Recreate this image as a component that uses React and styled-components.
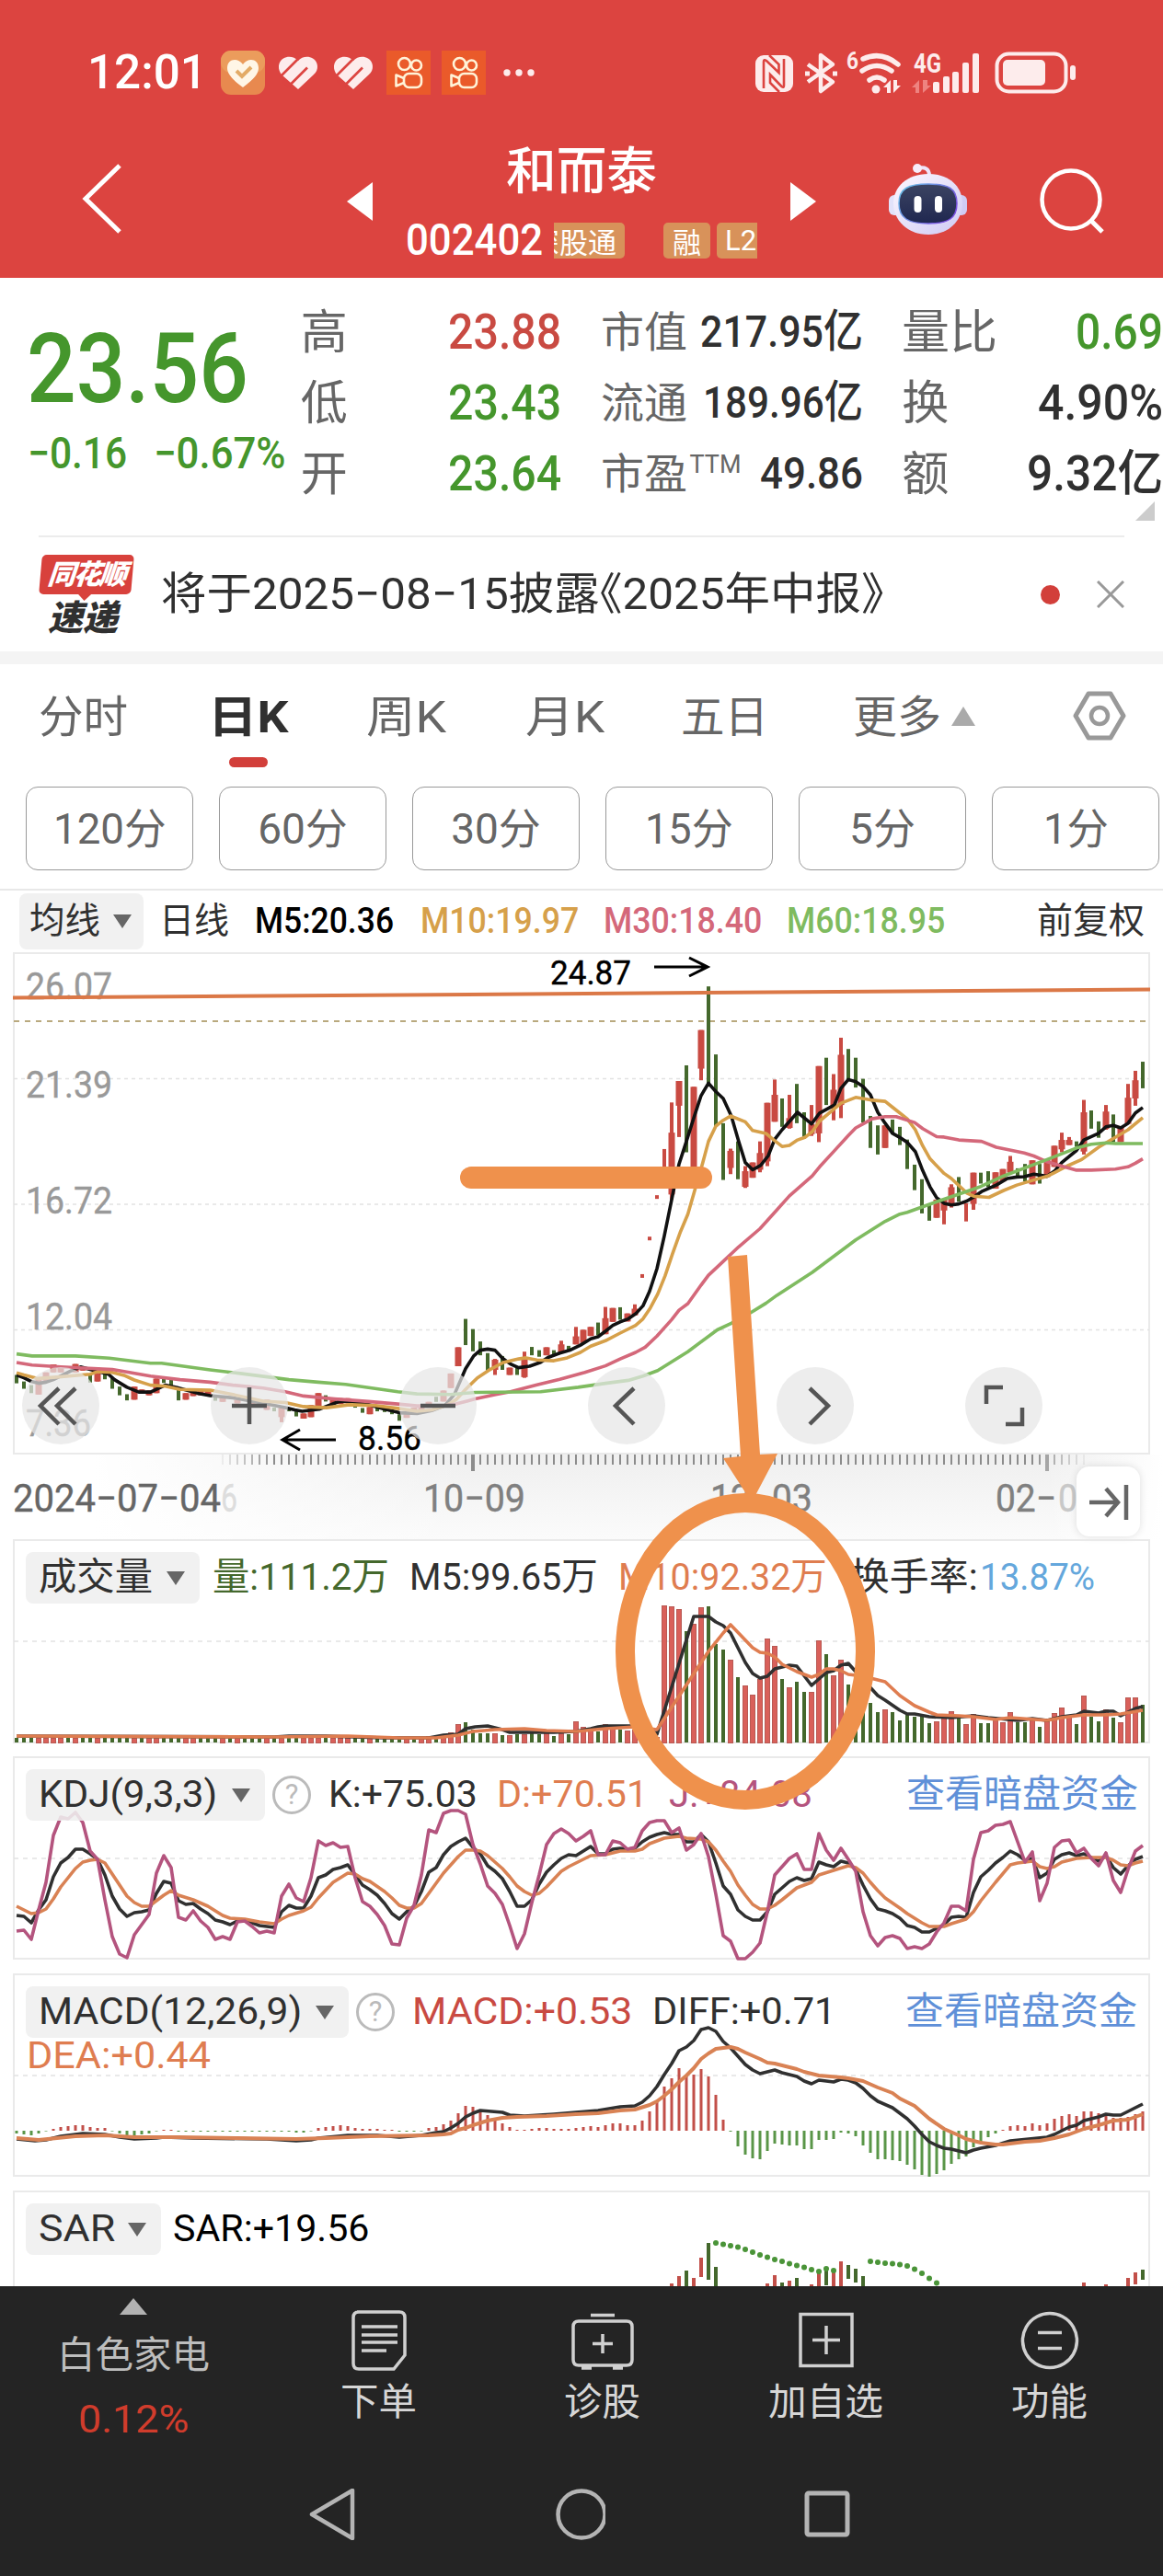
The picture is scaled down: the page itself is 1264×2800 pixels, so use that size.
import { useLayoutEffect, useRef, useState } from "react";
import styled, { createGlobalStyle } from "styled-components";

const COLORS = {
  red: "#dc4440",
  up: "#c94a42",
  down: "#45962c",
  darkGreen: "#44682c",
  ink: "#303030",
  grey: "#666",
  orange: "#df7d50",
  gold: "#d6a04a",
  pink: "#d4687a",
  green: "#7fbb60",
  purple: "#b4547e",
  blue: "#5f90d8",
  mark: "#ef914c",
};

const FONT = '"Roboto", "Noto Sans CJK SC", sans-serif';

/* ---------- chart data: x is the bar index, y is px inside the panel ---------- */

const STEP = 8;
const barX = (i) => 3 + i * STEP;
const priceY = (v) => (v - 15) / 2.529;

const MA5 =
  "0,1172 1,1180 2,1190 3,1195 4,1192 5,1185 7.5,1160 8.7,1150 10,1157 12.5,1170 13.3,1185 15,1206 16.6,1219 18.2,1219 20.2,1200 21.7,1206 24.8,1223 26.3,1229 29.4,1235 33.5,1250 36.5,1262 37.8,1268 38.8,1272 41.1,1266 43.7,1246 45.2,1244 47.2,1250 49.8,1265 52,1276 54.4,1278 56.4,1270 58.2,1256 59.5,1225 61,1155 62.1,1120 63,1104 64,1101 65,1104 66,1126 67.1,1142 68.2,1152 69.7,1148 71.2,1137 72.2,1124 73.8,1112 75.3,1103 76.6,1090 78,1073 79,1067 80,1052 81,1036 82,1026 83.1,1018 84.1,1004 85.1,982 86,942 87,880 88,790 89,690 90,592 91,530 92,466 93,404 94,370 95,393 96,412 97.1,460 98.1,530 99,588 100,608 101.1,596 102.1,570 103,524 104,498 106.1,450 108,482 109.1,452 111.1,430 112,384 113,360 114,366 115,379 116,402 117,450 118,480 119,508 120,519 121,533 122.1,558 123.1,610 124.1,655 125,685 126,700 127,705 128,702 129.1,694 130.1,682 131.1,668 133.1,650 134.6,632 135.9,628 136.9,627 138.2,620 140,626 141,612 142,588 144,555 145,526 147,508 148,490 149,486 150,493 151,480 152,452 153,437";
const MA10 =
  "0,1166 1,1172 2.9,1182 5.4,1178 10,1170 11,1163 13,1165 14.6,1173 16,1186 18.2,1200 20.2,1203 22.2,1212 26.3,1214 29.4,1226 33.5,1244 36.5,1248 39,1259 42.1,1262 45.2,1254 48.8,1256 51.8,1264 54.4,1272 56.4,1268 58.5,1255 59.7,1240 61,1212 62.6,1180 64.1,1160 66.1,1138 68.2,1128 69.2,1125 70.7,1131 73,1133 74.8,1125 76.6,1110 78,1093 80,1078 82,1057 84.1,1036 85.1,1018 86.1,988 87.1,950 88.1,900 89.1,840 90.2,778 91.2,730 92.2,660 93.2,590 94,530 95,488 96,472 97,460 99,476 100,500 101.8,508 102.8,525 104,544 105,541 106.1,526 107.1,519 108.1,503 109.1,474 111.1,440 112,425 114,409 116,416 118,420 119,436 121,468 122.1,498 123.1,542 124.1,578 126,618 127,632 129.1,672 130.1,681 132.1,684 134.1,665 135.9,650 138.2,636 140,626 141,616 142.7,598 144.7,580 147,546 149,522 151,498 153,465";
const MA30 =
  "0,1138 2.1,1145 6,1150 13,1157 18.2,1175 22.2,1185 26.3,1192 29.4,1200 33.5,1208 36.5,1218 39,1230 43.2,1238 47.8,1245 51.8,1252 54.4,1257 58,1257 59.7,1252 62.3,1238 65.1,1226 67.1,1218 70.7,1199 73.8,1184 77.2,1165 80,1147 82,1128 84.1,1110 85.4,1096 87,1065 89,1020 90,994 91.2,976 93,925 94,898 96,860 98.1,820 101,770 103,725 105,680 108.1,625 109.1,600 111.1,556 113,514 114,493 115,482 116.2,468 118,462 119.5,462 122,478 123.1,495 125,517 126,518 128,526 131.1,530 133.1,546 136.9,562 138.2,570 140,586 142,598 144,609 146,609 149.3,606 151,600 152,590 153,578";
const MA60 =
  "0,1114 2.1,1120 8,1120 12.6,1126 18.2,1140 19.7,1140 26.3,1158 30.4,1168 37,1185 41,1192 44.7,1198 51.8,1218 54.4,1224 59,1226 62.3,1220 71.2,1218 76.3,1206 80,1195 83.1,1187 85.1,1175 87.1,1160 91.2,1108 95.2,1048 97.1,1030 99.8,1000 101.8,975 103.3,953 108.1,890 114,801 118,750 120,730 121,725 125,696 131,654 134.1,625 140,580 144,548 146,538 148,534 149.3,536 153,536";

// [index, high, low]
const DOWN_CANDLES = [
  [0, 1172, 1195], [1, 1190, 1210], [2, 1200, 1222], [10, 1170, 1193], [12, 1165, 1184], [13, 1180, 1210],
  [14, 1204, 1228], [15, 1225, 1242], [20, 1183, 1194], [21, 1185, 1204], [22, 1210, 1242], [27, 1232, 1243],
  [35, 1262, 1272], [37, 1266, 1272], [38, 1272, 1286], [42, 1228, 1245], [46, 1250, 1262], [47, 1263, 1276],
  [49, 1262, 1272], [50, 1265, 1274], [51, 1268, 1280], [52, 1280, 1298], [57, 1232, 1246], [61, 1018, 1090],
  [62, 1046, 1107], [63, 1080, 1118], [64, 1112, 1160], [66, 1120, 1158], [68, 1150, 1172], [70, 1095, 1118],
  [71, 1104, 1122], [73, 1104, 1116], [75, 1092, 1104], [79, 1028, 1063], [82, 986, 1020], [91, 321, 560],
  [94, 104, 370], [95, 291, 490], [96, 480, 636], [98, 530, 634], [104, 412, 490], [106, 372, 480],
  [107, 450, 522], [110, 300, 430], [113, 276, 365], [114, 300, 382], [115, 358, 478], [116, 460, 548],
  [117, 486, 566], [119, 470, 510], [120, 490, 540], [121, 525, 606], [122, 594, 664], [123, 634, 728],
  [124, 705, 748], [128, 628, 696], [131, 616, 646], [132, 612, 656], [136, 604, 632], [137, 592, 640],
  [139, 592, 646], [144, 530, 545], [146, 445, 495], [147, 475, 520], [149, 456, 532], [153, 311, 384],
];

// [index, high, low, open, close], the body fills the whole range when left out
const UP_CANDLES = [
  [3, 1182, 1226], [4, 1165, 1188], [5, 1143, 1165], [6, 1152, 1165], [8, 1142, 1165], [9, 1150, 1160],
  [11, 1162, 1190], [16, 1204, 1240], [17, 1212, 1220], [18, 1215, 1228], [19, 1182, 1222], [23, 1222, 1240],
  [24, 1213, 1230], [25, 1216, 1228], [26, 1216, 1228], [28, 1235, 1246], [30, 1240, 1250], [32, 1243, 1252],
  [34, 1240, 1268], [36, 1262, 1302, 1262, 1288], [39, 1278, 1292], [40, 1255, 1288], [41, 1222, 1262],
  [43, 1236, 1252], [44, 1236, 1252], [45, 1236, 1250], [48, 1260, 1280], [53, 1275, 1290], [54, 1262, 1280],
  [55, 1255, 1272], [56, 1246, 1262], [58, 1215, 1245], [59, 1168, 1208], [60, 1096, 1148],
  [65, 1128, 1172, 1130, 1158], [67, 1152, 1172], [69, 1108, 1180, 1130, 1178], [72, 1096, 1118],
  [74, 1078, 1110, 1088, 1110], [76, 1040, 1088, 1066, 1088], [77, 1048, 1084], [78, 1040, 1065],
  [80, 985, 1060, 1016, 1060], [81, 988, 1026], [83, 1003, 1025], [84, 978, 1008, 990, 1008],
  [88, 551, 640, 600, 601], [89, 423, 690, 506, 676], [90, 364, 518, 364, 432], [92, 380, 600],
  [93, 224, 362, 224, 330], [97, 550, 620, 556, 603], [99, 598, 658, 612, 655], [100, 588, 630],
  [101, 530, 615, 562, 608], [102, 424, 598, 424, 585], [103, 360, 476, 402, 476], [105, 402, 495, 466, 493],
  [108, 430, 515, 482, 510], [109, 323, 532, 323, 508], [111, 345, 472, 388, 440], [112, 245, 466, 292, 430],
  [118, 486, 548], [125, 690, 740], [126, 690, 758, 690, 720], [127, 648, 712, 656, 706],
  [129, 700, 750, 701, 702], [130, 616, 718, 616, 702], [133, 615, 660], [134, 606, 640],
  [135, 570, 618, 586, 616], [138, 582, 648], [140, 580, 628], [141, 542, 600], [142, 506, 560, 526, 552],
  [143, 518, 540, 526, 540], [145, 416, 566, 450, 558], [148, 430, 498, 448, 496], [150, 490, 532],
  [151, 372, 482, 410, 482], [152, 336, 432, 362, 412],
];
const LIMIT_UPS = [[85, 900], [86, 797], [87, 683]];

const DOWN_DAYS = new Set([
  0, 1, 2, 7, 9, 10, 12, 13, 14, 15, 17, 20, 21, 22, 25, 26, 27, 29, 31, 32, 33, 35, 37, 38, 42, 46, 47, 49, 50,
  51, 52, 54, 57, 61, 62, 63, 64, 66, 68, 70, 71, 73, 75, 79, 82, 91, 94, 95, 96, 98, 104, 106, 107, 110, 113,
  114, 115, 116, 117, 119, 120, 121, 122, 123, 124, 128, 131, 132, 136, 137, 139, 144, 146, 147, 149, 153,
]);
const VOLUMES = [
  ...Array(56).fill(5), 7, 4, 7, 11, 20, 22, 14, 10, 10, 10, 8, 8, 9, 9, 10, 9, 11, 7, 10, 9, 23, 17, 14, 12, 20,
  15, 14, 13, 14, 8, 6, 6, 149, 148, 145, 121, 129, 147, 148, 107, 101, 90, 71, 62, 52, 69, 113, 105, 69, 60,
  66, 55, 55, 111, 96, 73, 90, 63, 50, 44, 43, 33, 36, 33, 24, 30, 28, 28, 21, 23, 28, 34, 28, 20, 31, 21, 21,
  24, 22, 33, 22, 22, 24, 17, 26, 32, 38, 28, 20, 51, 28, 23, 36, 27, 22, 49, 49, 41,
];
const VOL5 =
  "0,7 35,6 37,7 42,7 50,5 56,5 58,8 60,9 61,15 62.3,17 64,18 66,14 67,11 69,11 73,11 76,12 78,15 79,17 80,18 84,18 86,16 87,9 92,137 94,137 95,131 96,127 97,119 98,103 99,87 100,75 101,70 102,72 103,80 105,84 106,83 108,62 109,69 110,76 111,78 112,84 113,86 114,77 117,51 118,46 120,35 121,31 122,31 124,28 127,27 130,29 132,27 136,24 138,26 140,24 141,26 142,28 144,30 145,34 147,32 148,34 149,34 150,29 151,33 152,37 153,39";
const VOL10 =
  "0,7 35,6 45,7 52,5 57,5 60,8 62,12 65,14 69,15 72,13 76,12 80,15 84,17 87,14 94,99 96,119 97,128 100,103 101,98 102,97 103,93 104,85 106,77 108,71 109,74 110,80 111,80 112,78 113,74 114,73 116,70 118,66 120,51 122,40 124,33 125,30 128,29 130,28 133,25 135,27 140,24 142,27 145,30 148,30 150,31 153,35";

const KDJ_J = [
  189, 188, 198, 166, 136, 85, 65, 67, 60, 71, 102, 111, 155, 195, 214, 218, 193, 182, 171, 126, 107, 120, 174,
  177, 167, 178, 185, 198, 195, 198, 179, 178, 184, 191, 189, 191, 151, 138, 153, 157, 131, 91, 96, 93, 98, 97,
  131, 157, 162, 171, 183, 203, 204, 175, 161, 128, 79, 82, 61, 58, 58, 62, 95, 116, 140, 148, 160, 183, 208,
  192, 158, 128, 95, 83, 78, 83, 91, 86, 80, 106, 106, 91, 93, 100, 98, 80, 71, 69, 69, 82, 77, 101, 95, 83,
  108, 149, 194, 200, 219, 219, 212, 202, 168, 128, 119, 110, 105, 122, 122, 83, 101, 112, 99, 111, 124, 168,
  194, 205, 196, 194, 197, 208, 206, 208, 203, 190, 180, 162, 162, 167, 111, 82, 80, 74, 73, 70, 92, 114, 103,
  156, 137, 98, 91, 90, 104, 99, 110, 118, 104, 134, 147, 122, 102, 96,
];
const KDJ_K = [
  172, 173, 180, 166, 155, 130, 115, 109, 100, 100, 105, 111, 128, 151, 165, 173, 169, 168, 166, 148, 135, 137,
  156, 160, 159, 165, 170, 177, 179, 182, 178, 178, 180, 183, 184, 185, 168, 161, 164, 164, 151, 131, 128, 122,
  120, 117, 128, 139, 144, 150, 159, 170, 176, 168, 162, 146, 125, 120, 106, 97, 92, 88, 98, 105, 118, 124, 132,
  146, 162, 162, 155, 138, 125, 117, 110, 106, 107, 102, 97, 105, 105, 100, 99, 100, 99, 92, 87, 84, 82, 84, 84,
  92, 92, 84, 92, 115, 140, 149, 166, 173, 177, 177, 168, 149, 142, 135, 131, 134, 132, 114, 117, 119, 113, 115,
  122, 139, 154, 165, 167, 170, 175, 183, 185, 190, 190, 186, 182, 174, 173, 174, 147, 130, 123, 115, 109, 102,
  106, 112, 110, 131, 126, 111, 106, 104, 107, 105, 109, 113, 107, 120, 127, 118, 111, 108,
];
const KDJ_D =
  "0,162 1,166 2,170 3,169 4,165 5,154 6,141 7,131 8,121 9,114 10,112 11,111 12,115 13,127 14,139 15,151 16,158 17,162 18,162 19,156 20,150 21,145 22,150 24,155 26,162 28,172 29,175 31,176 33,179 35,181 36,176 37,172 39,167 40,163 41,153 43,136 45,126 46,127 47,132 48,135 50,146 51,153 52,161 53,164 54,164 55,159 56,148 58,126 60,108 61,101 62,101 63,102 64,107 66,121 67,130 68,140 69,146 70,150 71,148 72,141 74,124 75,119 77,111 78,107 80,106 82,102 84,102 85,100 86,94 87,91 88,88 90,86 91,88 93,89 94,92 95,101 96,113 97,124 98,139 99,150 100,160 101,165 102,165 103,161 104,155 106,142 108,136 109,128 111,123 113,118 114,120 115,126 116,136 117,145 118,153 120,164 121,170 123,180 124,184 126,184 127,181 129,176 130,168 131,156 133,136 135,117 136,115 138,113 139,119 140,121 141,119 142,114 144,110 146,109 148,109 149,112 150,117 151,118 152,115 153,113";

const DIFF =
  "0,179 2.5,181 4,180 6,176 9,173 12,174 14,177 16,179 19,178 20,177 24,178 34,179 38,181 40,180 41,178 45,175 49,175 52,177 55,175 57,172 58,171 59,167 60,162 61,155 62,151 63,148 66,150 67,153 69,154 73,152 76,150 79,148 82,144 84,143 85,139 86,132 87,122 88,109 89,97 90,83 91,79 92,72 93,60 94,58 95,62 96,73 97,80 98,89 99,98 100,104 101,108 103,104 104,107 106,111 107,116 108,119 109,115 111,117 112,114 113,115 114,118 115,124 116,132 117,138 119,145 120,151 121,157 122,165 123,174 124,182 125,186 126,189 127,190 128,192 129,194 130,191 131,189 133,186 135,181 140,177 141,174 142,170 143,166 144,164 145,159 147,155 148,152 149,153 150,153 151,149 153,141";
const DEA =
  "0,178 3,180 8,176 12,175 16,177 22,177 30,178 38,179 42,178 48,176 56,175 58,174 59,173 60,169 61,167 62,164 64,159 66,156 68,155 72,154 76,152 79,151 82,148 84,147 86,142 87,138 88,132 89,125 90,117 91,110 92,102 93,92 94,86 95,81 97,79 98,81 99,85 101,92 102,96 103,97 106,103 107,106 109,110 112,112 113,113 115,116 117,123 119,129 120,135 122,143 124,157 126,168 128,175 129,179 131,183 133,185 134,185 137,182 139,181 141,178 143,174 145,168 147,164 149,159 151,158 153,152";
const MACD = [
  -3, -4, -5, -3, -0.6, 2, 4, 5, 6, 6, 4, 3, 3, -0.6, -3, -5, -5, -4, -3, -0.6, 1, 1, -1, -1, -1, -1, -1, -1, -1,
  -1, -1, -1, -1, -1, -1, -1, -1, -1, -2, -2, -0.6, 3, 4, 5, 6, 5, 3, 2, 2, 2, 1, 1, -1, -1, -1, -0.6, 3, 4, 7,
  11, 19, 27, 26, 22, 17, 14, 8, 4, 1, 1, 2, 3, 3, 2, 2, 2, 3, 4, 5, 4, 6, 8, 8, 6, 6, 11, 21, 32, 48, 57, 68,
  60, 61, 67, 59, 39, 12, -1, -17, -26, -30, -31, -22, -14, -15, -16, -16, -20, -20, -10, -10, -9, -2, -3, -6,
  -16, -24, -31, -31, -32, -33, -37, -42, -48, -50, -47, -43, -36, -31, -28, -18, -12, -7, -3, 1, 5, 6, 5, 8, 6,
  8, 13, 16, 18, 16, 21, 21, 19, 16, 14, 14, 15, 18, 21,
];
// [index, top, bottom, rising]
const SAR_BARS = [
  [89, 100, 102, 1], [90, 92, 102, 1], [91, 86, 102], [92, 94, 102, 1], [93, 72, 92, 1], [94, 56, 95],
  [95, 82, 102], [102, 100, 102, 1], [103, 91, 102, 1], [104, 99, 102], [105, 97, 102, 1], [106, 94, 102],
  [108, 101, 102, 1], [109, 88, 102, 1], [110, 86, 101], [111, 88, 102, 1], [112, 76, 102, 1], [113, 80, 94],
  [114, 84, 98], [115, 92, 102], [145, 99, 102, 1], [148, 101, 102, 1], [151, 94, 102, 1], [152, 88, 100, 1],
  [153, 85, 95],
];
const SAR_DOTS = [
  [95, 56], [96, 57.5], [97, 59], [98, 60.5], [99, 63], [100, 66], [101, 69], [102, 71.5], [103, 74], [104, 76],
  [105, 78.5], [106, 80.5], [107, 82.5], [108, 85], [109, 87], [110, 84], [111, 86], [116, 76], [117, 77],
  [118, 78], [119, 78.5], [120, 79.5], [121, 81], [122, 84.5], [123, 89], [124, 94.5], [125, 99.5],
];

/* ---------- styles ---------- */

const GlobalStyle = createGlobalStyle`
  * {
    box-sizing: border-box;
  }
  body {
    margin: 0;
    background: #fff;
  }
`;

const Screen = styled.div`
  position: relative;
  width: 1264px;
  height: 2800px;
  overflow: hidden;
  display: flex;
  flex-direction: column;
  background: #fff;
  font-family: ${FONT};
  color: ${COLORS.ink};
`;

const FitBox = styled.span`
  display: inline-block;
  flex: none;
  width: ${({ $w }) => $w}px;
  margin-left: ${({ $ml }) => $ml ?? 0}px;
  font-size: ${({ $size }) => $size}px;
  font-weight: ${({ $weight }) => $weight ?? 400};
  color: ${({ $color }) => $color ?? "inherit"};
  line-height: 1.2;
  white-space: nowrap;
`;
const FitInner = styled.span`
  display: inline-block;
  transform-origin: left center;
`;

// Text stretched to an exact width, the numerals are narrower than the font's own
const Fit = ({ w, ml, size, weight, color, children }) => {
  const ref = useRef(null);
  const [scale, setScale] = useState(1);
  useLayoutEffect(() => {
    setScale(w / ref.current.offsetWidth);
  }, [w, size, weight, children]);
  return (
    <FitBox $w={w} $ml={ml} $size={size} $weight={weight} $color={color}>
      <FitInner ref={ref} style={{ transform: `scaleX(${scale})` }}>
        {children}
      </FitInner>
    </FitBox>
  );
};

const Header = styled.header`
  flex: none;
  height: 302px;
  background: ${COLORS.red};
  color: #fff;
`;
const StatusBar = styled.div`
  height: 140px;
  padding: 18px 91px 0 95px;
  display: flex;
  align-items: center;
`;
const AppBadge = styled.svg`
  flex: none;
  width: 48px;
  height: 48px;
  margin-left: ${({ $ml }) => $ml ?? 12}px;
`;
const StatusRight = styled.svg`
  margin-left: auto;
  width: 352px;
  height: 52px;
`;
const NavBar = styled.div`
  height: 162px;
  padding: 0 62px 0 88px;
  display: flex;
  align-items: flex-start;
`;
const NavIcon = styled.svg`
  flex: none;
  width: ${({ $w }) => $w}px;
  height: ${({ $h }) => $h}px;
  margin: ${({ $t }) => $t}px 0 0 ${({ $l }) => $l}px;
`;
const TitleBlock = styled.div`
  width: 455px;
  padding-top: 13px;
  display: flex;
  flex-direction: column;
  align-items: center;
`;
const CodeRow = styled.div`
  width: 382px;
  height: 58px;
  margin-top: 13px;
  display: flex;
  align-items: center;
`;
const Tag = styled.span`
  flex: none;
  width: ${({ $w }) => $w}px;
  height: 39px;
  margin-left: ${({ $ml }) => $ml}px;
  display: flex;
  justify-content: ${({ $align }) => $align ?? "center"};
  align-items: center;
  overflow: hidden;
  white-space: nowrap;
  padding: 0 9px;
  border-radius: ${({ $radius }) => $radius ?? "5px"};
  background: #d8925a;
  font-size: 31px;
`;

const Quote = styled.section`
  flex: none;
  position: relative;
  height: 280px;
  padding: 21px 0 0 29px;
  display: flex;
`;
const PriceBlock = styled.div`
  width: 298px;
  padding-top: 16px;
`;
const ChangeRow = styled.div`
  display: flex;
  margin-top: -1px;
  padding-left: 1px;
`;
const StatColumn = styled.div`
  width: ${({ $w }) => $w}px;
  margin-right: ${({ $mr }) => $mr ?? 0}px;
`;
const Stat = styled.div`
  height: 77px;
  display: flex;
  align-items: center;
  justify-content: space-between;
  color: ${COLORS.grey};
`;
const Sup = styled.sup`
  align-self: flex-start;
  margin: 12px auto 0 2px;
  font-size: 27px;
  line-height: 1.2;
`;
const Corner = styled.i`
  position: absolute;
  right: 9px;
  bottom: 16px;
  border-style: solid;
  border-width: 0 0 21px 21px;
  border-color: transparent transparent #ccc transparent;
`;

const News = styled.section`
  flex: none;
  height: 126px;
  margin: 0 42px;
  border-top: 2px solid #ececec;
  display: flex;
  align-items: center;
`;
const Halt = styled.span`
  font-feature-settings: "halt";
`;
const NewsLogo = styled.div`
  width: 104px;
  height: 88px;
  margin-top: 1px;
  display: flex;
  flex-direction: column;
  align-items: center;
  font-weight: 900;
  font-style: italic;
  line-height: 1;
`;
const LogoTop = styled.span`
  position: relative;
  width: 100px;
  height: 44px;
  line-height: 43px;
  text-align: center;
  font-size: 30px;
  letter-spacing: -2px;
  color: #fff;
  background: #d8413c;
  border-radius: 5px;
  transform: skewX(-5deg);

  &::after {
    content: "";
    position: absolute;
    left: 43px;
    top: 43px;
    border: 7px solid transparent;
    border-top-color: #d8413c;
  }
`;
const LogoBottom = styled.span`
  margin: 7px 8px 0 0;
  font-size: 38px;
`;
const UnreadDot = styled.i`
  width: 21px;
  height: 21px;
  margin-left: auto;
  border-radius: 50%;
  background: #d23f3a;
`;
const CloseIcon = styled.svg`
  width: 30px;
  height: 30px;
  margin-left: 40px;
`;
const Band = styled.div`
  flex: none;
  height: 14px;
  background: #f4f4f4;
`;

const Tabs = styled.nav`
  flex: none;
  height: 133px;
  padding: 29px 0 0 42px;
  display: flex;
  align-items: flex-start;
  color: ${COLORS.grey};
`;
const Tab = styled.div`
  display: flex;
  flex-direction: column;
  align-items: center;
  margin-left: ${({ $ml }) => $ml ?? 0}px;
  color: ${({ $active }) => ($active ? COLORS.ink : "inherit")};

  &::after {
    content: "";
    width: 42px;
    height: 11px;
    margin-top: 14px;
    border-radius: 6px;
    background: ${({ $active }) => ($active ? "#d23f3a" : "transparent")};
  }
`;
const TabMore = styled.svg`
  width: 26px;
  height: 21px;
  margin: 17px 0 0 11px;
`;
const Settings = styled.svg`
  width: 58px;
  height: 54px;
  margin: 0 0 0 106px;
`;
const Minutes = styled.div`
  flex: none;
  height: 113px;
  padding-left: 28px;
  display: flex;
  gap: 28px;
  border-bottom: 2px solid #e8e8e8;
`;
const MinuteButton = styled.button`
  flex: none;
  width: 182px;
  height: 91px;
  padding: 2px 0 0;
  border: 1.5px solid #999;
  border-radius: 13px;
  background: #fff;
  font-family: inherit;
  color: ${COLORS.grey};
`;

const Legend = styled.div`
  flex: none;
  position: relative;
  height: ${({ $h }) => $h ?? 80}px;
  padding-left: ${({ $pl }) => $pl ?? 12}px;
  display: flex;
  align-items: center;
`;
const Picker = styled.div`
  flex: none;
  width: ${({ $w }) => $w}px;
  height: ${({ $h }) => $h ?? 56}px;
  padding: 0 ${({ $pad }) => ($pad ?? 14) + 2}px 0 ${({ $pad }) => $pad ?? 14}px;
  display: flex;
  align-items: center;
  justify-content: space-between;
  border-radius: 8px;
  background: rgba(239, 239, 239, 0.88);

  &::after {
    content: "";
    border: 10px solid transparent;
    border-top: 15px solid ${COLORS.grey};
    border-bottom: 0;
  }
`;
const Help = styled.span`
  flex: none;
  width: 42px;
  height: 42px;
  margin-left: 8px;
  border: 3px solid #bbb;
  border-radius: 50%;
  font-size: 31px;
  line-height: 36px;
  text-align: center;
  color: #bbb;
`;
const SecondLine = styled.div`
  position: relative;
  padding-left: 13px;
  margin-top: -17px;
`;
const Panel = styled.section`
  flex: none;
  position: relative;
  height: ${({ $h }) => $h}px;
  margin: 0 14px ${({ $mb }) => $mb ?? 0}px;
  border: 2px solid #eaeaea;
  border-bottom-width: ${({ $open }) => ($open ? 0 : 2)}px;
`;
const Plot = styled.svg`
  position: absolute;
  left: -1px;
  top: 0;
  width: 1236px;
  height: 100%;
  overflow: visible;
`;
const ChartTools = styled.div`
  position: absolute;
  left: 8px;
  bottom: 9px;
  display: flex;
  gap: 121px;
`;
const ToolButton = styled.button`
  width: 84px;
  height: 84px;
  padding: 0;
  border: 0;
  border-radius: 50%;
  background: rgba(230, 230, 230, 0.72);
`;
const Ruler = styled.div`
  flex: none;
  position: relative;
  height: 92px;
  background: linear-gradient(90deg, #fff 0 8%, transparent 40% 90%, #fff),
    linear-gradient(#efefef, #fbfbfb);
`;
const LatestButton = styled.button`
  position: absolute;
  left: 1170px;
  top: 13px;
  width: 69px;
  height: 76px;
  padding: 0;
  border: 0;
  border-radius: 14px;
  background: #fff;
  box-shadow: 0 0 8px rgba(0, 0, 0, 0.12);
`;

const BottomBar = styled.footer`
  flex: none;
  height: 315px;
  background: #242424;
`;
const Actions = styled.div`
  height: 200px;
  padding-left: 23px;
  display: flex;
`;
const Action = styled.div`
  width: 243px;
  padding-top: 24px;
  display: flex;
  flex-direction: column;
  align-items: center;
  color: #d6d6d6;

  svg {
    width: 72px;
    height: 68px;
    margin-bottom: 10px;
  }
`;
const Sector = styled(Action)`
  margin-right: 24px;
  padding-top: 13px;
  color: #bdbdbd;

  &::before {
    content: "";
    border: 15px solid transparent;
    border-bottom: 18px solid #b2b2b2;
    border-top: 0;
    margin-bottom: 20px;
  }
  > span + span {
    margin-top: 19px;
  }
`;
const SystemKeys = styled.div`
  padding: 20px 0 0 333px;
  display: flex;
  gap: 213px;

  svg {
    width: 56px;
    height: 56px;
  }
`;
const Marks = styled.svg`
  position: absolute;
  left: 0;
  top: 1035px;
  width: 1264px;
  height: 960px;
  pointer-events: none;
`;

/* ---------- chart parts ---------- */

const Line = ({ points, y = (v) => v, color, width = 3.6 }) => {
  const list = Array.isArray(points)
    ? points.map((v, i) => [i, v])
    : points.split(" ").map((p) => p.split(",").map(Number));
  return (
    <polyline
      points={list.map(([i, v]) => `${barX(i).toFixed(1)},${y(v).toFixed(1)}`).join(" ")}
      fill="none"
      stroke={color}
      strokeWidth={width}
      strokeLinejoin="round"
    />
  );
};

const Guide = ({ y, color = "#e2e2e2", dash = "4 4", width = 1.5 }) => (
  <line x1="0" x2="1234" y1={y} y2={y} stroke={color} strokeWidth={width} strokeDasharray={dash} />
);

const AxisLabel = ({ x = 13, y, w = 94, color = "#999", size = 41, weight = 400, children }) => (
  <text
    x={x}
    y={y}
    textLength={w}
    lengthAdjust="spacingAndGlyphs"
    fontSize={size}
    fontWeight={weight}
    fill={color}
    stroke={color}
    strokeWidth="0.4"
  >
    {children}
  </text>
);

const Candles = () => (
  <g>
    {DOWN_CANDLES.map(([i, t, b]) => (
      <rect key={i} x={barX(i) - 2} y={priceY(t)} width="4" height={(b - t) / 2.529} fill={COLORS.darkGreen} />
    ))}
    {UP_CANDLES.map(([i, t, b, bt = t, bb = b]) => (
      <g key={i} fill={COLORS.up}>
        <rect x={barX(i) - 2} y={priceY(t)} width="4" height={(b - t) / 2.529} />
        <rect x={barX(i) - 3.5} y={priceY(bt)} width="7" height={(bb - bt) / 2.529} />
      </g>
    ))}
    {LIMIT_UPS.map(([i, v]) => (
      <rect key={i} x={barX(i) - 2} y={priceY(v) - 2} width="4" height="4" fill={COLORS.up} />
    ))}
  </g>
);

const TOOL_PATHS = [
  "M40 23 20 42 40 62M58 23 38 42 58 62",
  "M42 22V62M23 42H61",
  "M23 42H61",
  "M50 23 30 42 50 62",
  "M36 23 56 42 36 62",
  "M23 40V22H41M62 44V62H44",
];

const KlinePanel = () => (
  <Panel $h={546}>
    <Plot>
      <Guide y={73} color="#b9a97e" dash="6 6" width={2} />
      <Guide y={135.5} />
      <Guide y={272} />
      <Guide y={408.5} />
      <AxisLabel y={49}>26.07</AxisLabel>
      <AxisLabel y={156}>21.39</AxisLabel>
      <AxisLabel y={282}>16.72</AxisLabel>
      <AxisLabel y={408}>12.04</AxisLabel>
      <AxisLabel y={524} w={71}>7.36</AxisLabel>
      <Candles />
      <Line points={MA5} y={priceY} color="#111" />
      <Line points={MA10} y={priceY} color={COLORS.gold} />
      <Line points={MA30} y={priceY} color={COLORS.pink} />
      <Line points={MA60} y={priceY} color={COLORS.green} />
      <AxisLabel x={583} y={33} w={88} size={36} color="#000">24.87</AxisLabel>
      <path d="M696 14H754M734 4 754 14 734 24" fill="none" stroke="#000" strokeWidth="3" />
      <AxisLabel x={374} y={539} w={69} size={36} color="#000">8.56</AxisLabel>
      <path d="M350 528H292M311 517 292 528 311 539" fill="none" stroke="#000" strokeWidth="3" />
    </Plot>
    <ChartTools>
      {TOOL_PATHS.map((d) => (
        <ToolButton key={d}>
          <svg width="84" height="84">
            <path d={d} fill="none" stroke="#555" strokeWidth="4.5" />
          </svg>
        </ToolButton>
      ))}
    </ChartTools>
  </Panel>
);

const TimeRuler = () => (
  <Ruler>
    <svg width="1264" height="92">
      {Array.from({ length: 118 }, (_, n) => {
        const i = n + 28;
        const major = i === 62 || i === 140;
        const fade = Math.min(1, (n + 1) / 8, (146 - i) / 8);
        return (
          <rect
            key={i}
            x={18 + i * STEP - (major ? 2 : 1)}
            y="0"
            width={major ? 4 : 2}
            height={major ? 18 : 11}
            fill="#8c8c8c"
            opacity={fade}
          />
        );
      })}
      <AxisLabel x={14} y={62} w={226} size={42} color="#666">2024−07−04</AxisLabel>
      <AxisLabel x={240} y={62} w={18} size={42} color="#ddd">6</AxisLabel>
      <AxisLabel x={460} y={62} w={111} size={42} color="#808080">10−09</AxisLabel>
      <AxisLabel x={772} y={62} w={111} size={42} color="#808080">12−03</AxisLabel>
      <AxisLabel x={1082} y={62} w={66} size={42} color="#808080">02−</AxisLabel>
      <AxisLabel x={1150} y={62} w={21} size={42} color="#c8c8c8">0</AxisLabel>
    </svg>
    <LatestButton>
      <svg width="69" height="76">
        <path d="M14 39H43M32 24 45 39 32 54M54 20V58" fill="none" stroke="#666" strokeWidth="4.5" />
      </svg>
    </LatestButton>
  </Ruler>
);

const VolumePanel = () => (
  <Panel $h={222} $mb={14}>
    <Plot>
      <Guide y={109} dash="5 5" />
      {VOLUMES.map((h, i) =>
        DOWN_DAYS.has(i) ? (
          <rect key={i} x={barX(i) - 2} y={219 - h} width="4" height={h} fill={COLORS.darkGreen} />
        ) : (
          <rect
            key={i}
            x={barX(i) - 2.5}
            y={219.5 - h}
            width="5"
            height={h}
            fill="#d9605a"
            stroke="#b85a54"
          />
        )
      )}
      <Line points={VOL5} y={(v) => 219 - v} color={COLORS.ink} />
      <Line points={VOL10} y={(v) => 219 - v} color={COLORS.orange} />
    </Plot>
    <Legend>
      <Picker $w={189}>
        <Fit w={124} size={41}>成交量</Fit>
      </Picker>
      <Fit w={192} ml={14} size={41} color={COLORS.darkGreen}>量:111.2万</Fit>
      <Fit w={205} ml={22} size={41}>M5:99.65万</Fit>
      <Fit w={227} ml={22} size={41} color={COLORS.orange}>M10:92.32万</Fit>
      <Fit w={139} ml={25} size={41}>换手率:</Fit>
      <Fit w={125} ml={2} size={41} color="#64a7dc">13.87%</Fit>
    </Legend>
  </Panel>
);

const KdjPanel = () => (
  <Panel $h={221} $mb={15}>
    <Plot>
      <Guide y={109} dash="5 5" />
      <Line points={KDJ_K} y={(v) => v - 1} color={COLORS.ink} />
      <Line points={KDJ_D} y={(v) => v - 1} color="#d98254" />
      <Line points={KDJ_J} y={(v) => v - 1} color={COLORS.purple} />
    </Plot>
    <Legend>
      <Picker $w={260}>
        <Fit w={194} size={40}>KDJ(9,3,3)</Fit>
      </Picker>
      <Help>?</Help>
      <Fit w={162} ml={19} size={41}>K:+75.03</Fit>
      <Fit w={164} ml={21} size={41} color={COLORS.orange}>D:+70.51</Fit>
      <Fit w={156} ml={23} size={41} color={COLORS.purple}>J:+84.08</Fit>
      <Fit w={252} ml={102} size={41} color={COLORS.blue}>查看暗盘资金</Fit>
    </Legend>
  </Panel>
);

const MacdPanel = () => (
  <Panel $h={221} $mb={15}>
    <Plot>
      <Guide y={109} dash="5 5" />
      {MACD.map((h, i) => (
        <rect
          key={i}
          x={barX(i) - 1.5}
          y={h > 0 ? 169 - h : 169}
          width="3"
          height={Math.abs(h)}
          fill={h > 0 ? "#c24f49" : "#5a9648"}
        />
      ))}
      <Line points={DIFF} y={(v) => v - 1} color={COLORS.ink} />
      <Line points={DEA} y={(v) => v - 1} color="#d98254" width={4} />
    </Plot>
    <Legend>
      <Picker $w={351}>
        <Fit w={286} size={40}>MACD(12,26,9)</Fit>
      </Picker>
      <Help>?</Help>
      <Fit w={239} ml={19} size={41} color={COLORS.up}>MACD:+0.53</Fit>
      <Fit w={200} ml={22} size={41}>DIFF:+0.71</Fit>
      <Fit w={252} ml={75} size={41} color={COLORS.blue}>查看暗盘资金</Fit>
    </Legend>
    <SecondLine>
      <Fit w={200} size={41} color={COLORS.orange}>DEA:+0.44</Fit>
    </SecondLine>
  </Panel>
);

const SarPanel = () => (
  <Panel $h={104} $open>
    <Plot>
      {SAR_BARS.map(([i, t, b, up]) => (
        <rect key={i} x={barX(i) - 2} y={t - 1} width="4" height={b - t + 1} fill={up ? "#c24f49" : COLORS.darkGreen} />
      ))}
      {SAR_DOTS.map(([i, y]) => (
        <circle key={i} cx={barX(i)} cy={y - 1} r="3" fill="#4a9438" />
      ))}
    </Plot>
    <Legend>
      <Picker $w={147}>
        <Fit w={83} size={41}>SAR</Fit>
      </Picker>
      <Fit w={214} ml={13} size={41} color="#000">SAR:+19.56</Fit>
    </Legend>
  </Panel>
);

/* ---------- icons ---------- */

const StripedHeart = () => (
  <AppBadge viewBox="0 0 48 48">
    <path
      d="M24 42 7 27C1 21 2 12 8 8.500 13 5.500 20 6.500 24 11 28 6.500 35 5.500 40 8.500 46 12 47 21 41 26Z"
      fill="#fdecec"
    />
    <path d="M4 29 24 9M14 38.500 34 18.500" stroke={COLORS.red} strokeWidth="2.600" />
    <path d="M10 31 17 38 13 41 6 33Z" fill={COLORS.red} opacity="0.9" />
  </AppBadge>
);

const CameraBadge = () => (
  <AppBadge viewBox="0 0 48 48">
    <rect width="48" height="48" fill="#ea5a2a" />
    <g fill="none" stroke="#fff3d8" strokeWidth="2.600">
      <circle cx="19.500" cy="14.500" r="6.500" />
      <circle cx="32.500" cy="16" r="5.500" />
      <rect x="19" y="25" width="19" height="15" rx="5.500" />
      <path d="M19 30 10.500 26.500V38.500L19 35" strokeLinejoin="round" />
    </g>
  </AppBadge>
);

const StatusIcons = () => (
  <StatusRight viewBox="0 0 352 52">
    <rect x="0" y="7" width="41" height="40" rx="9" fill="#fdecec" />
    <path
      d="M9 43V14Q9 11 12 13L25.500 26V17L15 7M31 11V40Q31 43 28.500 41L16 28V37L26 47"
      fill="none"
      stroke={COLORS.red}
      strokeWidth="2.600"
    />
    <g fill="none" stroke="#fdecec" strokeWidth="4.500">
      <path d="M57 17 84 36 71 46V7L84 17 57 36" strokeLinejoin="round" />
      <path d="M54 27H59M84 27H89" strokeWidth="5" />
    </g>
    <text x="99" y="22" fontSize="25" fontWeight="700" fill="#fdecec" textLength="13" lengthAdjust="spacingAndGlyphs">6</text>
    <g fill="none" stroke="#fdecec" strokeWidth="5.500" strokeLinecap="round">
      <path d="M117 11Q137 2 155 17" />
      <path d="M116 24Q132 13 148 24" />
      <path d="M124 34Q132 28 140 34" />
    </g>
    <circle cx="131" cy="44" r="4.500" fill="#fdecec" />
    <path d="M139 42 147 34V48H143V42ZM150 34V48L158 40H154V34Z" fill="#fdecec" />
    <text x="172" y="26" fontSize="29" fontWeight="700" fill="#fdecec" textLength="30" lengthAdjust="spacingAndGlyphs">4G</text>
    <path d="M170 42 178 34V48H174V42ZM182 34V48L191 40H187V34Z" fill="#ee8380" />
    <g fill="#fdecec">
      <rect x="193" y="36" width="7" height="12" rx="2" />
      <rect x="204" y="30" width="7" height="18" rx="2" />
      <rect x="214" y="25" width="7" height="23" rx="2" />
      <rect x="225" y="15" width="7" height="33" rx="2" />
      <rect x="236" y="5" width="7" height="43" rx="2" />
      <rect x="269" y="12" width="46" height="28" rx="5" />
      <rect x="342" y="18" width="6" height="16" rx="3" />
    </g>
    <rect x="262.500" y="5.500" width="75" height="41" rx="13" fill="none" stroke="#fdecec" strokeWidth="4" />
  </StatusRight>
);

const Robot = () => (
  <NavIcon viewBox="0 0 86 78" $w={86} $h={78} $l={79} $t={37}>
    <defs>
      <linearGradient id="shell" x1="0" y1="0" x2="1" y2="1">
        <stop offset="0" stopColor="#fdf8ff" />
        <stop offset="1" stopColor="#cfcaf4" />
      </linearGradient>
      <linearGradient id="rim" x1="0" y1="0" x2="1" y2="0.6">
        <stop offset="0" stopColor="#68c8e8" />
        <stop offset="1" stopColor="#7a4ee0" />
      </linearGradient>
      <linearGradient id="glass" x1="0" y1="0" x2="0" y2="1">
        <stop offset="0" stopColor="#3c4462" />
        <stop offset="1" stopColor="#1f2750" />
      </linearGradient>
    </defs>
    <path d="M31 6Q44 3 44 14" fill="none" stroke="#eee4fa" strokeWidth="4" />
    <circle cx="31" cy="6" r="5" fill="#f6ecfa" />
    <rect x="0" y="35" width="13" height="22" rx="6" fill="#e2e2fa" />
    <rect x="72" y="35" width="13" height="22" rx="6" fill="#d0ccf4" />
    <path d="M43 12C66 12 80 26 80 44S66 78 43 78 5 62 5 44 20 12 43 12Z" fill="url(#shell)" />
    <path d="M43 23C65 23 74 28 74 44S65 66 43 66 11 60 11 44 21 23 43 23Z" fill="url(#glass)" stroke="url(#rim)" strokeWidth="1.500" />
    <rect x="27.500" y="36" width="8" height="18" rx="4" fill="#fff" />
    <rect x="50" y="36" width="8" height="18" rx="4" fill="#fff" />
  </NavIcon>
);

const ACTIONS = [
  {
    label: "下单",
    width: 83,
    icon: <path d="M12 4H58Q64 4 64 10V51L52 66H14Q8 66 8 60V10Q8 4 14 4M17 20H56M17 29H56M17 37H56M17 46H44" />,
  },
  {
    label: "诊股",
    width: 83,
    icon: <path d="M10 14H62Q68 14 68 20V56Q68 62 62 62H10Q4 62 4 56V20Q4 14 10 14M23 7.500H49M13 65H24M47 65H58M36 28V49M25 38.500H47" />,
  },
  { label: "加自选", width: 125, icon: <path d="M8 6.500H64V62.500H8ZM36 19V50M21 34.500H51" /> },
  { label: "功能", width: 83, icon: <path d="M36 5.500A29.500 29.500 0 1 1 35.900 5.500ZM23 26.500H49M23 43.500H49" /> },
];

const QUOTE_COLUMNS = [
  { w: 284, mr: 43, size: 53, labelW: 51, rows: [["高", "23.88", 123, COLORS.up], ["低", "23.43", 123, COLORS.down], ["开", "23.64", 123, COLORS.down]] },
  { w: 285, mr: 42, size: 49, labelW: 94, rows: [["市值", "217.95亿", 177], ["流通", "189.96亿", 174], ["市盈", "49.86", 112]] },
  { w: 284, mr: 0, size: 53, labelW: 104, rows: [["量比", "0.69", 95, COLORS.down], ["换", "4.90%", 136], ["额", "9.32亿", 148]] },
];

const MINUTES = [["120分", 123], ["60分", 98], ["30分", 98], ["15分", 96], ["5分", 72], ["1分", 71]];

const App = () => (
  <Screen>
    <GlobalStyle />
    <Header>
      <StatusBar>
        <Fit w={130} size={52} weight={500}>12:01</Fit>
        <AppBadge viewBox="0 0 48 48" $ml={15}>
          <rect width="48" height="48" rx="11" fill="#e8894f" />
          <rect width="48" height="24" rx="11" fill="#eb9c5c" />
          <path d="M24 40C12 31 7 25 7 19 7 9 18 7 24 15 30 7 41 9 41 19 41 25 36 31 24 40Z" fill="#fff6e6" />
          <path d="M17 22 23 28 33 18" fill="none" stroke="#e3ab66" strokeWidth="4" />
        </AppBadge>
        <StripedHeart />
        <StripedHeart />
        <CameraBadge />
        <CameraBadge />
        <AppBadge viewBox="0 0 48 48" $ml={16}>
          <g fill="#fdecec">
            <circle cx="7" cy="24" r="3.700" />
            <circle cx="20" cy="24" r="3.700" />
            <circle cx="33" cy="24" r="3.700" />
          </g>
        </AppBadge>
        <StatusIcons />
      </StatusBar>
      <NavBar>
        <NavIcon $w={44} $h={76} $l={0} $t={38}>
          <path d="M42 2 5 38 42 74" fill="none" stroke="#fff" strokeWidth="5" />
        </NavIcon>
        <NavIcon $w={28} $h={42} $l={245} $t={58}>
          <path d="M28 0V42L0 21Z" fill="#fff" />
        </NavIcon>
        <TitleBlock>
          <Fit w={164} size={55} weight={500}>和而泰</Fit>
          <CodeRow>
            <Fit w={149} size={49} weight={500}>002402</Fit>
            <Tag $w={77} $ml={12} $align="flex-end" $radius="0 5px 5px 0">深股通</Tag>
            <Tag $w={51} $ml={42}>融</Tag>
            <Tag $w={44} $ml={7} $align="flex-start" $radius="5px 0 0 5px">L2</Tag>
          </CodeRow>
        </TitleBlock>
        <NavIcon $w={28} $h={42} $l={0} $t={58}>
          <path d="M0 0V42L28 21Z" fill="#fff" />
        </NavIcon>
        <Robot />
        <NavIcon $w={72} $h={72} $l={78} $t={42}>
          <circle cx="34" cy="35" r="31.500" fill="none" stroke="#fff" strokeWidth="4.500" />
          <path d="M56 58 68 70" stroke="#fff" strokeWidth="5" />
        </NavIcon>
      </NavBar>
    </Header>

    <Quote>
      <PriceBlock>
        <Fit w={241} size={105} weight={500} color={COLORS.down}>23.56</Fit>
        <ChangeRow>
          <Fit w={108} size={48} weight={500} color={COLORS.down}>−0.16</Fit>
          <Fit w={144} ml={29} size={48} weight={500} color={COLORS.down}>−0.67%</Fit>
        </ChangeRow>
      </PriceBlock>
      {QUOTE_COLUMNS.map(({ w, mr, size, labelW, rows }) => (
        <StatColumn key={labelW} $w={w} $mr={mr}>
          {rows.map(([label, value, width, color]) => (
            <Stat key={label}>
              <Fit w={label.length === 1 ? 51 : labelW} size={label.length === 1 || labelW > 100 ? 51 : 46}>
                {label}
              </Fit>
              {label === "市盈" && <Sup>TTM</Sup>}
              <Fit w={width} size={size} weight={500} color={color ?? COLORS.ink}>
                {value}
              </Fit>
            </Stat>
          ))}
        </StatColumn>
      ))}
      <Corner />
    </Quote>

    <News>
      <NewsLogo>
        <LogoTop>同花顺</LogoTop>
        <LogoBottom>速递</LogoBottom>
      </NewsLogo>
      <Fit w={786} ml={29} size={48}>
        将于2025−08−15披露<Halt>《</Halt>2025年中报<Halt>》</Halt>
      </Fit>
      <UnreadDot />
      <CloseIcon>
        <path d="M1 1 29 29M29 1 1 29" stroke="#999" strokeWidth="3" />
      </CloseIcon>
    </News>
    <Band />

    <Tabs>
      <Tab><Fit w={97} size={48}>分时</Fit></Tab>
      <Tab $ml={87} $active><Fit w={88} size={48} weight={700}>日K</Fit></Tab>
      <Tab $ml={84}><Fit w={87} size={48}>周K</Fit></Tab>
      <Tab $ml={86}><Fit w={86} size={48}>月K</Fit></Tab>
      <Tab $ml={83}><Fit w={95} size={48}>五日</Fit></Tab>
      <Tab $ml={92}><Fit w={96} size={48}>更多</Fit></Tab>
      <TabMore><path d="M13 0 26 21H0Z" fill="#aaa" /></TabMore>
      <Settings>
        <path d="M17 3H41L55 27 41 51H17L3 27Z" fill="none" stroke="#999" strokeWidth="5" strokeLinejoin="round" />
        <circle cx="29" cy="27" r="9" fill="none" stroke="#999" strokeWidth="4.500" />
      </Settings>
    </Tabs>
    <Minutes>
      {MINUTES.map(([label, w]) => (
        <MinuteButton key={label}>
          <Fit w={w} size={46}>{label}</Fit>
        </MinuteButton>
      ))}
    </Minutes>

    <Legend $h={67} $pl={21}>
      <Picker $w={135} $h={61} $pad={11}>
        <Fit w={77} size={39}>均线</Fit>
      </Picker>
      <Fit w={76} ml={17} size={39}>日线</Fit>
      <Fit w={151} ml={28} size={39} weight={500} color="#000">M5:20.36</Fit>
      <Fit w={172} ml={29} size={39} weight={500} color={COLORS.gold}>M10:19.97</Fit>
      <Fit w={172} ml={27} size={39} weight={500} color={COLORS.pink}>M30:18.40</Fit>
      <Fit w={172} ml={27} size={39} weight={500} color={COLORS.green}>M60:18.95</Fit>
      <Fit w={117} ml={100} size={39}>前复权</Fit>
    </Legend>
    <KlinePanel />
    <TimeRuler />
    <VolumePanel />
    <KdjPanel />
    <MacdPanel />
    <SarPanel />

    <BottomBar>
      <Actions>
        <Sector>
          <Fit w={166} size={41}>白色家电</Fit>
          <Fit w={120} size={43} color="#d03c2c">0.12%</Fit>
        </Sector>
        {ACTIONS.map(({ label, width, icon }) => (
          <Action key={label}>
            <svg viewBox="0 0 72 68" fill="none" stroke="#d0d0d0" strokeWidth="3.500">
              {icon}
            </svg>
            <Fit w={width} size={41}>{label}</Fit>
          </Action>
        ))}
      </Actions>
      <SystemKeys>
        <svg fill="none" stroke="#b4b4b4" strokeWidth="4.500" strokeLinejoin="round">
          <path d="M50 2V54L6 28Z" />
        </svg>
        <svg fill="none" stroke="#b4b4b4" strokeWidth="4.500">
          <circle cx="30" cy="28" r="25.500" />
        </svg>
        <svg fill="none" stroke="#b4b4b4" strokeWidth="5">
          <rect x="6" y="5" width="44" height="45" rx="2" />
        </svg>
      </SystemKeys>
    </BottomBar>

    <Marks fill="none" stroke={COLORS.mark}>
      <path d="M14 49.500 1250 40.500" stroke="#db7847" strokeWidth="4" />
      <path d="M512 245H762" strokeWidth="24" strokeLinecap="round" />
      <path d="M791 331 812 329 826 546 845 545 817 598 786 550 805 548Z" fill={COLORS.mark} stroke="none" />
      <ellipse cx="810" cy="760" rx="130.500" ry="161.500" strokeWidth="21" />
    </Marks>
  </Screen>
);

export default App;
